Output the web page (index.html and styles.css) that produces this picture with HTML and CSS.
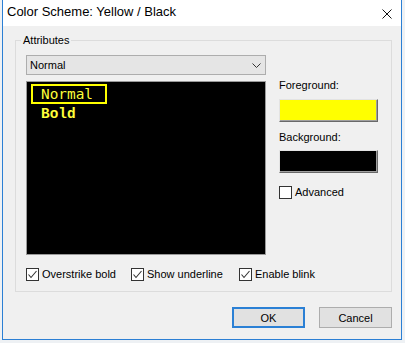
FILE: index.html
```html
<!DOCTYPE html>
<html>
<head>
<meta charset="utf-8">
<link rel="stylesheet" href="styles.css">
</head>
<body>
<div class="window">
  <div class="titlebar">
    <span class="title">Color Scheme: Yellow / Black</span>
    <svg class="close" width="10" height="10" viewBox="0 0 10 10"><path d="M0.5 0.5 L9.5 9.5 M9.5 0.5 L0.5 9.5" stroke="#111" stroke-width="1" fill="none"/></svg>
  </div>
  <div class="body">
    <fieldset class="group">
      <legend>Attributes</legend>
      <div class="group-main">
        <div class="left-col">
          <div class="select"><span>Normal</span><svg class="chev" width="9" height="5" viewBox="0 0 9 5"><polyline points="0.5,0.5 4.5,4.5 8.5,0.5" stroke="#333" stroke-width="1" fill="none"/></svg></div>
          <div class="preview">
            <div class="pv-normal">Normal</div>
            <div class="pv-bold">Bold</div>
          </div>
        </div>
        <div class="right-col">
          <div class="lbl">Foreground:</div>
          <div class="swatch swatch-yellow"></div>
          <div class="lbl lbl-bg">Background:</div>
          <div class="swatch swatch-black"></div>
          <div class="check check-adv"><span class="box"></span><span>Advanced</span></div>
        </div>
      </div>
      <div class="checks">
        <div class="check"><span class="box"><svg width="11" height="11" viewBox="0 0 11 11"><polyline points="1.5,5.5 4,8.5 9.5,2" stroke="#333" stroke-width="1.1" fill="none"/></svg></span><span>Overstrike bold</span></div>
        <div class="check"><span class="box"><svg width="11" height="11" viewBox="0 0 11 11"><polyline points="1.5,5.5 4,8.5 9.5,2" stroke="#333" stroke-width="1.1" fill="none"/></svg></span><span>Show underline</span></div>
        <div class="check"><span class="box"><svg width="11" height="11" viewBox="0 0 11 11"><polyline points="1.5,5.5 4,8.5 9.5,2" stroke="#333" stroke-width="1.1" fill="none"/></svg></span><span>Enable blink</span></div>
      </div>
    </fieldset>
    <div class="buttons">
      <button class="btn btn-default">OK</button>
      <button class="btn">Cancel</button>
    </div>
  </div>
</div>
</body>
</html>
```
FILE: styles.css
```css
html, body {
  margin: 0;
  padding: 0;
}
body {
  background: #eef1f4;
  font-family: "Liberation Sans", Arial, sans-serif;
  font-size: 11px;
  color: #000;
}
.window {
  margin-left: 2px;
  width: 400px;
  height: 340px;
  box-sizing: border-box;
  border: 1px solid #2b7fd4;
  border-top: none;
  background: #f0f0f0;
  display: flex;
  flex-direction: column;
}
.titlebar {
  height: 26px;
  box-sizing: border-box;
  background: #fff;
  display: flex;
  align-items: flex-start;
  padding: 4px 0 0 4px;
}
.title {
  font-size: 13px;
  line-height: 15px;
  color: #000;
}
.close {
  margin-left: auto;
  margin-right: 9px;
  margin-top: 5px;
}
.body {
  padding: 7px 9px 0 12px;
}
.group {
  margin: 0;
  width: 377px;
  box-sizing: border-box;
  border: 1px solid #dcdcdc;
  padding: 8px 13px 10px 10px;
  min-width: 0;
}
.group legend {
  padding: 0 2px;
  margin-left: -5px;
  line-height: 14px;
}
.group-main {
  display: flex;
  gap: 13px;
}
.left-col {
  width: 240px;
  display: flex;
  flex-direction: column;
  gap: 6px;
}
.select {
  height: 20px;
  box-sizing: border-box;
  border: 1px solid #adadad;
  background: #e5e5e5;
  display: flex;
  align-items: center;
  padding: 0 4px 0 3px;
  line-height: 14px;
}
.chev {
  margin-left: auto;
}
.preview {
  height: 174px;
  box-sizing: border-box;
  background: #000;
  border: 1px solid #9a9a9a;
  padding: 2px 4px;
}
.pv-normal {
  display: inline-block;
  border: 2px solid #ffff00;
  color: #ffff3a;
  font-family: "DejaVu Sans Mono", monospace;
  font-size: 14.4px;
  line-height: 16px;
  padding: 0 12px 0 8px;
}
.pv-bold {
  color: #ffff3a;
  font-family: "Liberation Mono", "Courier New", monospace;
  font-weight: bold;
  font-size: 14.4px;
  line-height: 16px;
  padding-left: 10px;
  margin-top: 2px;
}
.right-col {
  width: 99px;
  padding-top: 23px;
  display: flex;
  flex-direction: column;
}
.lbl {
  line-height: 14px;
}
.lbl-bg {
  margin-top: 8px;
}
.swatch {
  height: 23px;
  box-sizing: border-box;
  margin-top: 7px;
  border: 1px solid;
  border-color: #e3e3e3 #696969 #696969 #e3e3e3;
  box-shadow: inset -1px -1px 0 #a0a0a0;
}
.lbl + .swatch-black {
  margin-top: 6px;
}
.swatch-yellow {
  background: #ffff00;
}
.swatch-black {
  background: #000;
}
.check {
  display: flex;
  align-items: center;
  gap: 3px;
  line-height: 13px;
  white-space: nowrap;
}
.check-adv {
  margin-top: 13px;
}
.box {
  width: 13px;
  height: 13px;
  box-sizing: border-box;
  border: 1px solid #333;
  background: #fff;
  display: flex;
  align-items: center;
  justify-content: center;
  flex: none;
}
.checks {
  display: grid;
  grid-template-columns: 105px 108px auto;
  margin-top: 13px;
}
.buttons {
  display: flex;
  justify-content: flex-end;
  gap: 14px;
  margin-top: 15px;
}
.btn {
  width: 73px;
  height: 21px;
  box-sizing: border-box;
  border: 1px solid #adadad;
  background: #e1e1e1;
  font-family: "Liberation Sans", Arial, sans-serif;
  font-size: 11px;
  color: #000;
  padding: 0;
  margin: 0;
}
.btn-default {
  border: 2px solid #2b80d5;
}
```
